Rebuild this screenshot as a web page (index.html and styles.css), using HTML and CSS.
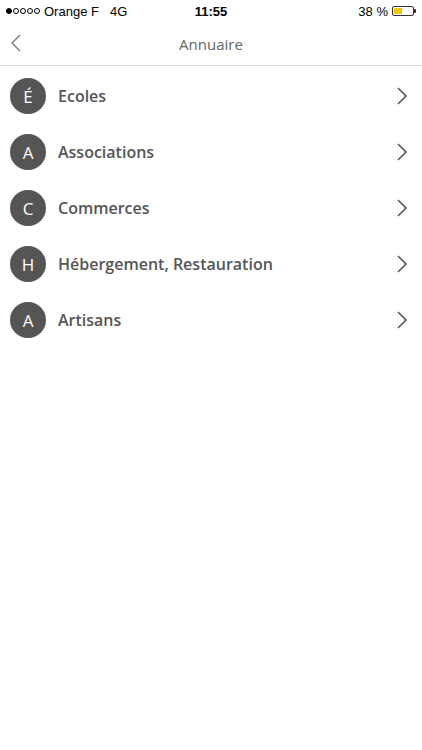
FILE: index.html
```html
<!DOCTYPE html>
<html lang="fr">
<head>
    <meta charset="UTF-8">
    <meta name="viewport" content="width=device-width, initial-scale=1.0">
    <title>Annuaire</title>
    <link rel="stylesheet" href="styles.css">
</head>
<body>
    <div class="statusbar">
        <div class="status-left">
            <span class="signal">
                <span class="dot full"></span><span class="dot"></span><span class="dot"></span><span class="dot"></span><span class="dot"></span>
            </span>
            <span>Orange F</span>
            <span class="net">4G</span>
        </div>
        <div class="status-time">11:55</div>
        <div class="status-right">
            <span>38 %</span>
            <span class="battery"><span class="battery-level"></span></span>
            <span class="battery-tip"></span>
        </div>
    </div>

    <div class="navbar">
        <svg class="back" width="12" height="18" viewBox="0 0 12 18">
            <path d="M10 1 L2 9 L10 17" fill="none" stroke="#7a7a7a" stroke-width="1.4"/>
        </svg>
        <div class="title">Annuaire</div>
    </div>

    <ul class="list">
        <li class="row">
            <span class="avatar">É</span>
            <span class="label">Ecoles</span>
            <svg class="chevron" width="12" height="18" viewBox="0 0 12 18"><path d="M2 1 L10 9 L2 17" fill="none" stroke="#555" stroke-width="1.6"/></svg>
        </li>
        <li class="row">
            <span class="avatar">A</span>
            <span class="label">Associations</span>
            <svg class="chevron" width="12" height="18" viewBox="0 0 12 18"><path d="M2 1 L10 9 L2 17" fill="none" stroke="#555" stroke-width="1.6"/></svg>
        </li>
        <li class="row">
            <span class="avatar">C</span>
            <span class="label">Commerces</span>
            <svg class="chevron" width="12" height="18" viewBox="0 0 12 18"><path d="M2 1 L10 9 L2 17" fill="none" stroke="#555" stroke-width="1.6"/></svg>
        </li>
        <li class="row">
            <span class="avatar">H</span>
            <span class="label">Hébergement, Restauration</span>
            <svg class="chevron" width="12" height="18" viewBox="0 0 12 18"><path d="M2 1 L10 9 L2 17" fill="none" stroke="#555" stroke-width="1.6"/></svg>
        </li>
        <li class="row">
            <span class="avatar">A</span>
            <span class="label">Artisans</span>
            <svg class="chevron" width="12" height="18" viewBox="0 0 12 18"><path d="M2 1 L10 9 L2 17" fill="none" stroke="#555" stroke-width="1.6"/></svg>
        </li>
    </ul>
</body>
</html>
```

FILE: styles.css
```css
body {
    margin: 0;
    width: 422px;
    height: 750px;
    background-color: #fff;
    font-family: "Open Sans", Arial, sans-serif;
    color: #555;
}

.statusbar {
    height: 22px;
    display: flex;
    align-items: center;
    justify-content: space-between;
    padding: 0 6px 0 6px;
    font-family: "Liberation Sans", Arial, sans-serif;
    font-size: 13px;
    color: #000;
    position: relative;
}
.status-left {
    display: flex;
    align-items: center;
    gap: 3px;
}
.signal {
    display: flex;
    gap: 1px;
    margin-right: 1px;
}
.dot {
    width: 6px;
    height: 6px;
    border: 1px solid #000;
    border-radius: 50%;
    box-sizing: border-box;
}
.dot.full {
    background-color: #000;
}
.net {
    margin-left: 8px;
}
.status-time {
    position: absolute;
    left: 0;
    right: 0;
    text-align: center;
    font-weight: bold;
    font-size: 13px;
}
.status-right {
    display: flex;
    align-items: center;
    gap: 4px;
}
.battery {
    width: 22px;
    height: 10px;
    border: 1px solid #333;
    border-radius: 2px;
    box-sizing: border-box;
    padding: 1px;
    display: flex;
}
.battery-level {
    width: 8px;
    background-color: #f5c400;
}
.battery-tip {
    width: 2px;
    height: 4px;
    background-color: #333;
    margin-left: -4px;
    border-radius: 0 1px 1px 0;
}

.navbar {
    height: 43px;
    display: flex;
    align-items: center;
    justify-content: center;
    border-bottom: 1px solid #dcdcdc;
    position: relative;
}
.back {
    position: absolute;
    left: 10px;
    top: 12px;
}
.title {
    font-size: 15px;
    color: #666;
}

.list {
    list-style: none;
    margin: 0;
    padding: 2px 0 0 0;
}
.row {
    height: 56px;
    display: flex;
    align-items: center;
    padding: 0 14px 0 10px;
}
.avatar {
    width: 36px;
    height: 36px;
    border-radius: 50%;
    background-color: #555;
    color: #fff;
    display: flex;
    align-items: center;
    justify-content: center;
    font-size: 17px;
}
.label {
    flex: 1;
    margin-left: 12px;
    font-size: 16px;
    font-weight: 600;
    color: #555;
}
.chevron {
    display: block;
}
```
